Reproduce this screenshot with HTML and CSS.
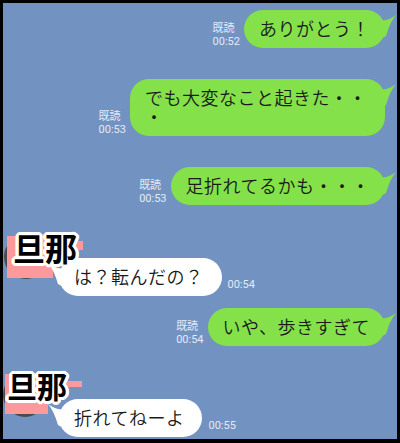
FILE: index.html
```html
<!DOCTYPE html>
<html lang="ja">
<head>
<meta charset="utf-8">
<link rel="stylesheet" href="styles.css">
</head>
<body>
<div class="screen">
  <div class="chat">
    <div class="row sent">
      <div class="meta"><span>既読</span><span>00:52</span></div>
      <div class="bubble green">ありがとう！<svg class="tail" viewBox="0 0 20 32"><path d="M2,10 Q10,12 19,5 Q13,12 9,26 L2,30 Z"/></svg></div>
    </div>
    <div class="row sent">
      <div class="meta"><span>既読</span><span>00:53</span></div>
      <div class="bubble green">でも大変なこと起きた・・・<svg class="tail" viewBox="0 0 20 32"><path d="M2,10 Q10,12 19,5 Q13,12 9,26 L2,30 Z"/></svg></div>
    </div>
    <div class="row sent">
      <div class="meta"><span>既読</span><span>00:53</span></div>
      <div class="bubble green">足折れてるかも・・・<svg class="tail" viewBox="0 0 20 32"><path d="M2,10 Q10,12 19,5 Q13,12 9,26 L2,30 Z"/></svg></div>
    </div>
    <div class="row recv">
      <div class="avatar av1">
        <span class="circle"></span>
        <span class="censor"></span>
        <span class="censor small"></span>
        <span class="name">旦那</span>
      </div>
      <div class="bubble white">は？転んだの？<svg class="tail" viewBox="0 0 20 32"><path d="M2,10 Q10,12 19,5 Q13,12 9,26 L2,30 Z"/></svg></div>
      <div class="meta time"><span>00:54</span></div>
    </div>
    <div class="row sent">
      <div class="meta"><span>既読</span><span>00:54</span></div>
      <div class="bubble green">いや、歩きすぎて<svg class="tail" viewBox="0 0 20 32"><path d="M2,10 Q10,12 19,5 Q13,12 9,26 L2,30 Z"/></svg></div>
    </div>
    <div class="row recv">
      <div class="avatar av2">
        <span class="circle"></span>
        <span class="censor"></span>
        <span class="censor small"></span>
        <span class="name">旦那</span>
      </div>
      <div class="bubble white">折れてねーよ<svg class="tail" viewBox="0 0 20 32"><path d="M2,10 Q10,12 19,5 Q13,12 9,26 L2,30 Z"/></svg></div>
      <div class="meta time"><span>00:55</span></div>
    </div>
  </div>
</div>
</body>
</html>
```
FILE: styles.css
```css
html, body {
  margin: 0;
  background: #000;
}
body {
  width: 400px;
  height: 443px;
  overflow: hidden;
}
.screen {
  padding: 3px 3px 4px 3px;
  box-sizing: border-box;
  height: 443px;
}
.chat {
  height: 436px;
  background: #7293c2;
  display: flex;
  flex-direction: column;
  padding-top: 7px;
  box-sizing: border-box;
  overflow: hidden;
  font-family: Roboto, "Noto Sans CJK JP", sans-serif;
}
.row {
  display: flex;
  align-items: flex-end;
}
.row + .row {
  margin-top: 31px;
}
.recv + .sent {
  margin-top: 12px;
}
.sent {
  justify-content: flex-end;
  padding-right: 12px;
  gap: 4px;
}
.meta {
  display: flex;
  flex-direction: column;
  font-size: 11px;
  line-height: 13px;
  color: #e4eaf5;
  white-space: nowrap;
}
.time {
  margin-left: 6px;
  margin-bottom: 5px;
}
.bubble {
  position: relative;
  border-radius: 19px;
  padding: 10px 15px 9px;
  font-size: 18px;
  font-weight: 350;
  letter-spacing: 0.5px;
  line-height: 19px;
  color: #1a1a1a;
  max-width: 225px;
  line-break: anywhere;
}
.green {
  background: #84e14a;
  fill: #84e14a;
}
.white {
  background: #fff;
  fill: #fff;
  padding-right: 18px;
  margin-top: 22px;
}
.tail {
  position: absolute;
  top: 0;
  width: 20px;
  height: 32px;
}
.green .tail {
  right: -12px;
}
.white .tail {
  left: -12px;
  transform: scaleX(-1);
}
.avatar {
  position: relative;
  width: 56px;
  height: 44px;
  flex: none;
  align-self: flex-start;
}
.circle {
  position: absolute;
  border-radius: 50%;
  background: #4b4b4b;
  width: 44px;
  height: 44px;
}
.censor {
  position: absolute;
  background: #fc9a9b;
}
.name {
  position: absolute;
  z-index: 2;
  font-family: "Noto Sans CJK JP", sans-serif;
  font-weight: 700;
  color: #000;
  line-height: 1;
  white-space: nowrap;
  text-shadow:
    3px 0 #fff, -3px 0 #fff, 0 3px #fff, 0 -3px #fff,
    2px 2px #fff, -2px -2px #fff, 2px -2px #fff, -2px 2px #fff,
    3px 1px #fff, -3px 1px #fff, 3px -1px #fff, -3px -1px #fff,
    1px 3px #fff, -1px 3px #fff, 1px -3px #fff, -1px -3px #fff;
}
.av1 .circle { left: 1px; top: -1px; }
.av1 .censor { left: 4px; top: 0; width: 46px; height: 42px; }
.av1 .censor.small { left: 72px; top: 5px; width: 8px; height: 9px; }
.av1 .name { left: 10px; top: -5px; font-size: 32px; }
.av2 .circle { left: 0; top: -4px; }
.av2 .censor { left: 2px; top: -3px; width: 43px; height: 40px; }
.av2 .censor.small { left: 64px; top: 4px; width: 15px; height: 6px; }
.av2 .name { left: 4px; top: -7px; font-size: 30px; }
```
